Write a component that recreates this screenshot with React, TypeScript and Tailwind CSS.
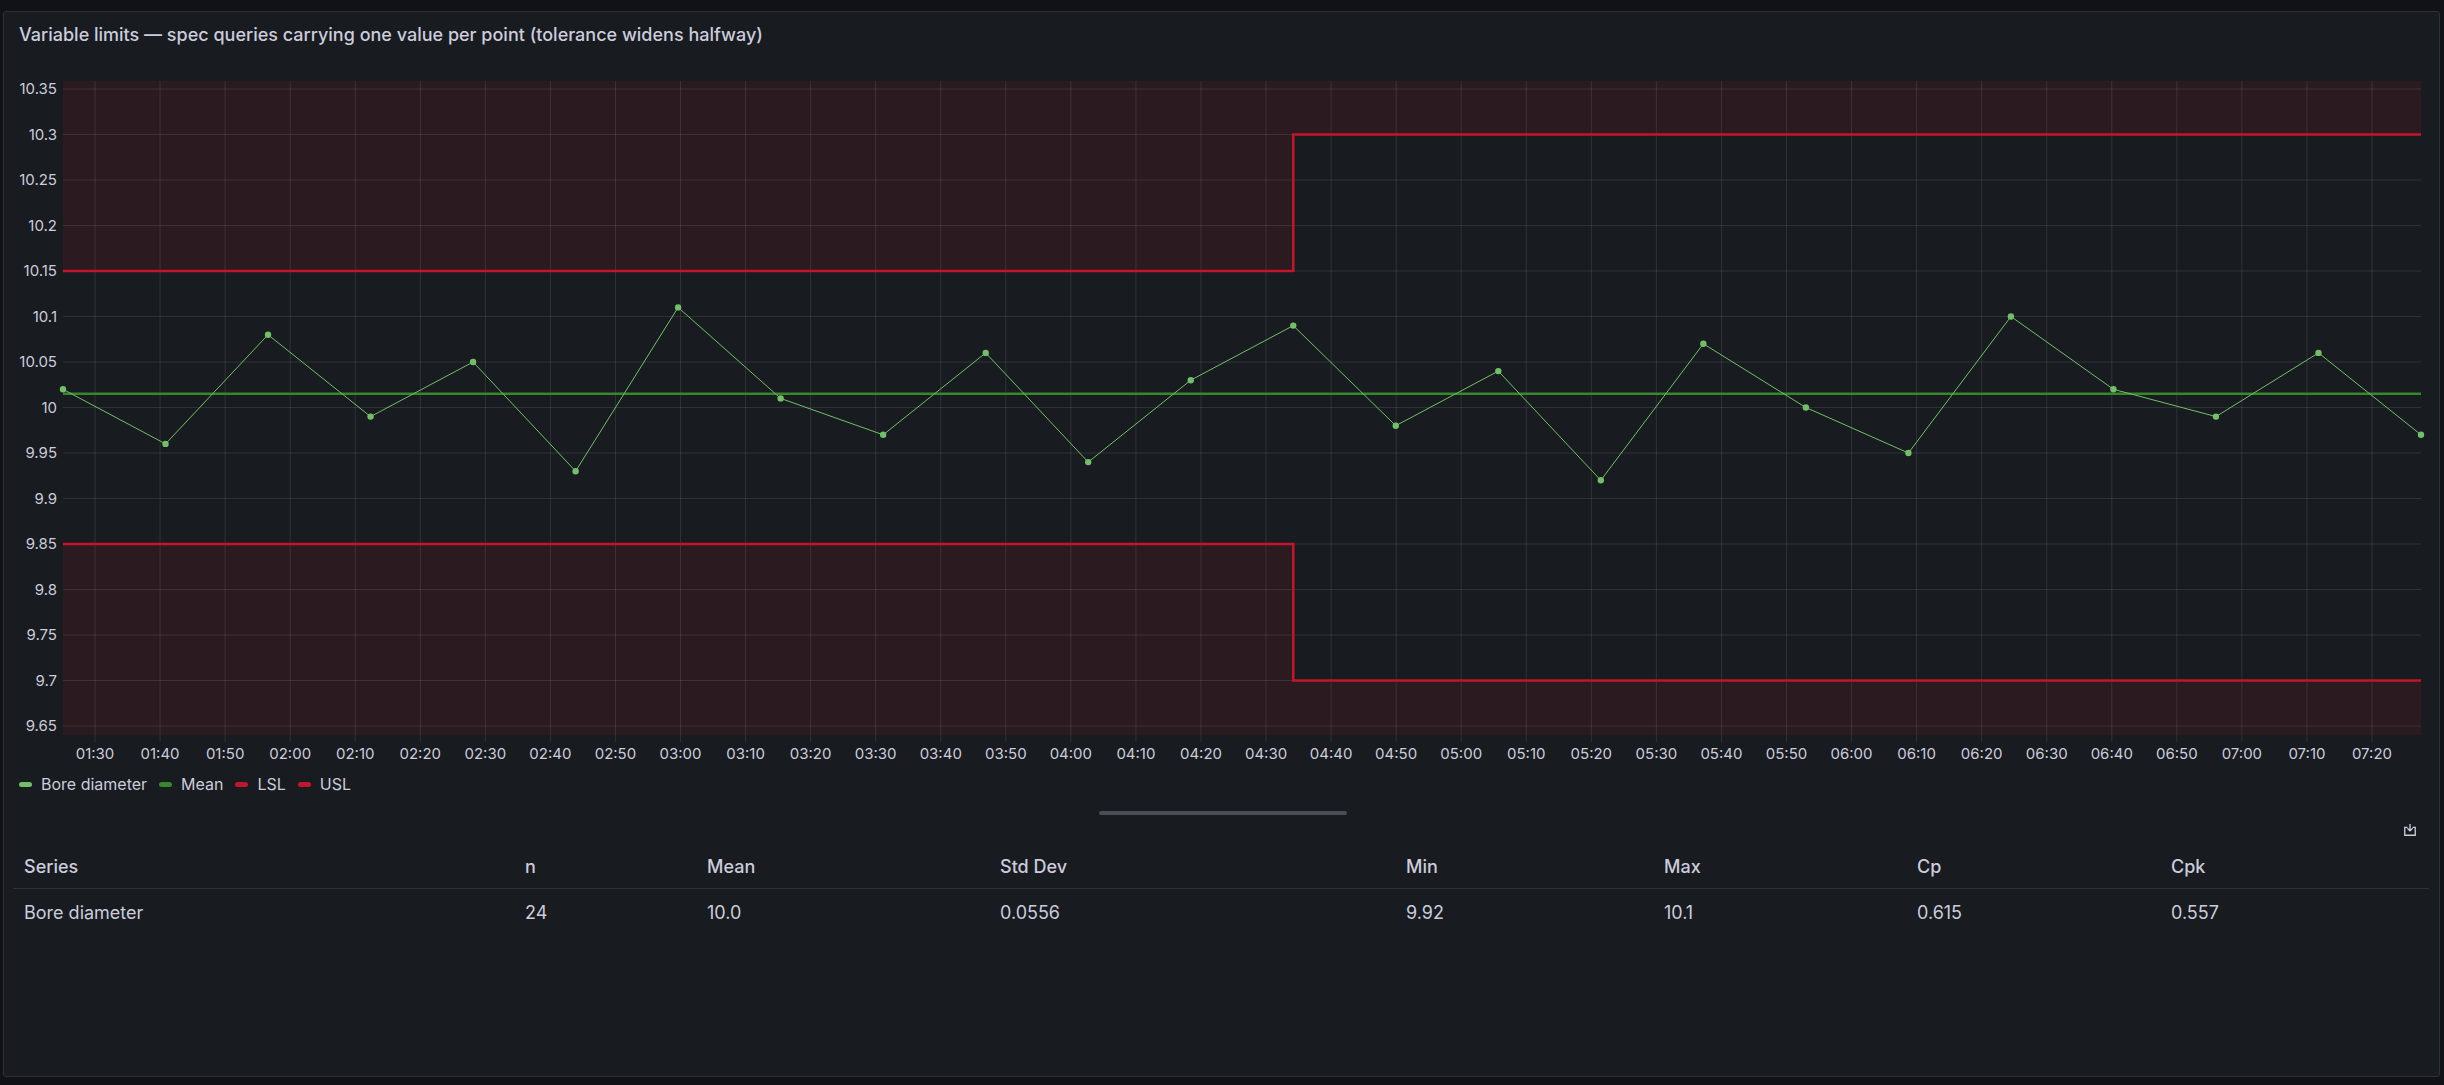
import React from "react";

const vals = [10.02, 9.96, 10.08, 9.99, 10.05, 9.93, 10.11, 10.01, 9.97, 10.06, 9.94, 10.03, 10.09, 9.98, 10.04, 9.92, 10.07, 10.0, 9.95, 10.1, 10.02, 9.99, 10.06, 9.97];
const L = 62, R = 2420, T = 81, B = 735;
const y = (v: number) => 89 + ((10.35 - v) / 0.05) * 45.5;
const px = (i: number) => L + i * ((R - L) / 23);
const STEP = px(12);
const yTicks = ["10.35", "10.3", "10.25", "10.2", "10.15", "10.1", "10.05", "10", "9.95", "9.9", "9.85", "9.8", "9.75", "9.7", "9.65"];
const xTicks: string[] = [];
for (let m = 90; m <= 440; m += 10) {
  const h = Math.floor(m / 60), mm = m % 60;
  xTicks.push(`${String(h).padStart(2, "0")}:${String(mm).padStart(2, "0")}`);
}
const tx = (i: number) => 94 + i * ((2371 - 94) / 35);

function Chart() {
  const font = "Inter, 'Liberation Sans', sans-serif";
  const usl = `M${L} ${y(10.15)} H${STEP} V${y(10.3)} H${R}`;
  const lsl = `M${L} ${y(9.85)} H${STEP} V${y(9.7)} H${R}`;
  return (
    <svg width={2437} height={700} viewBox="3 71 2437 700" className="block">
      <path d={`M${L} ${T} H${R} V${y(10.3)} H${STEP} V${y(10.15)} H${L} Z`} fill="#2b1a20" />
      <path d={`M${L} ${B} H${R} V${y(9.7)} H${STEP} V${y(9.85)} H${L} Z`} fill="#2b1a20" />
      {yTicks.map((t, i) => {
        const yy = 89 + i * 45.5;
        return (
          <g key={t}>
            <line x1={L} x2={R} y1={yy} y2={yy} stroke="#ffffff" strokeOpacity={0.1} />
            <text x={56} y={yy + 5} textAnchor="end" fontSize={15} fill="#ccccdc" fontFamily={font}>{t}</text>
          </g>
        );
      })}
      {xTicks.map((t, i) => (
        <g key={t}>
          <line x1={tx(i)} x2={tx(i)} y1={T} y2={742} stroke="#ffffff" strokeOpacity={0.1} />
          <text x={tx(i)} y={759} textAnchor="middle" fontSize={15} fill="#ccccdc" fontFamily={font}>{t}</text>
        </g>
      ))}
      <line x1={L} x2={R} y1={y(10.015)} y2={y(10.015)} stroke="#37872d" strokeWidth={2.5} />
      <path d={usl} fill="none" stroke="#c4162a" strokeWidth={2.5} />
      <path d={lsl} fill="none" stroke="#c4162a" strokeWidth={2.5} />
      <polyline points={vals.map((v, i) => `${px(i)},${y(v)}`).join(" ")} fill="none" stroke="#73bf69" strokeWidth={1} />
      {vals.map((v, i) => (
        <circle key={i} cx={px(i)} cy={y(v)} r={3.2} fill="#73bf69" />
      ))}
    </svg>
  );
}

const cols = [
  { h: "Series", v: "Bore diameter", x: 12 },
  { h: "n", v: "24", x: 524 },
  { h: "Mean", v: "10.0", x: 706 },
  { h: "Std Dev", v: "0.0556", x: 999 },
  { h: "Min", v: "9.92", x: 1405 },
  { h: "Max", v: "10.1", x: 1663 },
  { h: "Cp", v: "0.615", x: 1916 },
  { h: "Cpk", v: "0.557", x: 2170 },
];
const widths = cols.map((c, i) => (i < cols.length - 1 ? cols[i + 1].x - c.x : 2427 - c.x));

export default function App() {
  return (
    <div className="w-full h-[1085px] bg-[#111217] pt-[11px] pl-[3px]" style={{ fontFamily: "Inter, 'Liberation Sans', sans-serif" }}>
      <div className="w-[2437px] h-[1066px] bg-[#181b1f] border border-[#2c2f35] rounded-[3px] flex flex-col">
        <div className="h-[59px] pt-[11px] pl-[15px] text-[18px] leading-[24px] font-medium text-[#ccccdc]">
          Variable limits — spec queries carrying one value per point (tolerance widens halfway)
        </div>
        <Chart />
        <div className="flex items-center gap-[12px] pl-[15px] h-[26px] text-[16px] text-[#ccccdc]">
          {[["Bore diameter", "#73bf69"], ["Mean", "#37872d"], ["LSL", "#c4162a"], ["USL", "#c4162a"]].map(([n, c]) => (
            <div key={n} className="flex items-center gap-[9px]">
              <span className="w-[13px] h-[5px] rounded-full" style={{ background: c }} />
              <span>{n}</span>
            </div>
          ))}
        </div>
        <div className="flex justify-center pt-[14px] pl-[3px]">
          <div className="w-[248px] h-[4px] rounded-full bg-[#4a4d54]" />
        </div>
        <div className="flex justify-end pr-[22px] pt-[8px] h-[30px] text-[#ccccdc]">
          <svg width="14" height="14" viewBox="0 0 16 16" fill="none" stroke="currentColor" strokeWidth="1.5">
            <path d="M8 1v8M5 6l3 3 3-3M5 5H2v9h12V5h-3" />
          </svg>
        </div>
        <div className="flex h-[44px] items-center border-b border-[#2f3238] mx-[9px] w-[2416px] text-[18px] font-medium text-[#ccccdc]">
          {cols.map((c, i) => (
            <div key={c.h} style={{ width: widths[i] }} className={i === 0 ? "pl-[11px]" : ""}>{c.h}</div>
          ))}
        </div>
        <div className="flex h-[46px] items-center mx-[9px] text-[18px] text-[#ccccdc]">
          {cols.map((c, i) => (
            <div key={c.h} style={{ width: widths[i] }} className={i === 0 ? "pl-[11px]" : ""}>{c.v}</div>
          ))}
        </div>
      </div>
    </div>
  );
}
